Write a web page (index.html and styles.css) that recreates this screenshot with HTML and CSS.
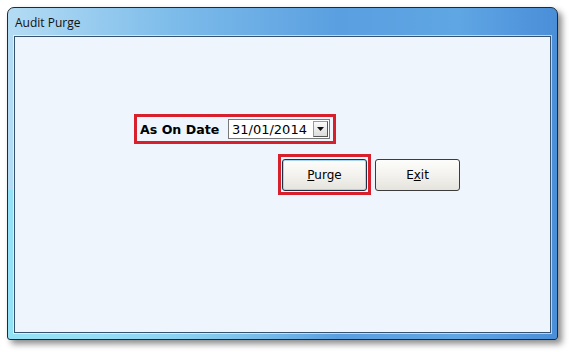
FILE: index.html
```html
<!DOCTYPE html>
<html lang="en">
<head>
  <meta charset="UTF-8">
  <title>Audit Purge</title>
  <link rel="stylesheet" href="styles.css">
</head>
<body>
<div class="window">
  <div class="titlebar">Audit Purge</div>
  <div class="client">
    <div class="mark date-row">
      <label class="date-label">As On Date</label>
      <div class="combo">
        <span class="combo-text">31/01/2014</span>
        <span class="combo-btn">
          <svg width="9" height="5" viewBox="0 0 9 5"><path d="M1 0h7L4.5 4z" fill="#111"/></svg>
        </span>
      </div>
    </div>
    <div class="btn-row">
      <div class="mark purge-mark">
        <button class="btn"><u>P</u>urge</button>
      </div>
      <button class="btn">E<u>x</u>it</button>
    </div>
  </div>
</div>
</body>
</html>
```

FILE: styles.css
```css
html, body { margin: 0; padding: 0; }
body { background: #fff; width: 569px; height: 352px; padding: 7px 0 0 7px; box-sizing: border-box; font-family: "DejaVu Sans", Verdana, sans-serif; }

.window {
  width: 551px; height: 333px; box-sizing: border-box;
  border: 1px solid #1d2a38; border-radius: 7px 7px 3px 3px;
  background:
    linear-gradient(90deg, #94e2f6 0%, rgba(148,226,246,0.6) 30%, rgba(148,226,246,0) 60%) left bottom / 100% 45% no-repeat,
    linear-gradient(90deg, #b4dcf4 0%, #7dbcea 30%, #5a9fe0 60%, #5fa6e4 82%, #4a8ed8 100%);
  box-shadow: 4px 4px 6px rgba(0,0,0,0.45);
  display: flex; flex-direction: column;
  padding: 0 6px 6px 6px;
}

.titlebar {
  height: 28px; line-height: 29px; padding-left: 1px;
  font-family: "Open Sans", "Noto Sans", sans-serif; font-size: 12px; color: #111;
}

.client {
  flex: 1; background: #eef5fd; border: 1px solid #36526e;
  padding: 77px 0 0 119px; box-sizing: border-box;
  box-shadow: 0 0 0 1px rgba(255,255,255,0.6);
}

.mark { border: 3px solid #d8202c; box-sizing: border-box; display: flex; align-items: center; }

.date-row { width: 202px; height: 30px; padding: 0 3px 0 3px; justify-content: space-between; }
.date-label { font-weight: bold; font-size: 12.6px; color: #000; }

.combo {
  width: 102px; height: 20px; box-sizing: border-box;
  border: 1px solid #7a7a7a; background: #fff;
  display: flex; align-items: center; justify-content: space-between;
  padding: 0 1px 0 3px;
}
.combo-text { font-size: 13px; color: #000; }
.combo-btn {
  width: 15px; height: 16px; box-sizing: border-box;
  border: 1px solid #9a9a9a; border-right-color: #555; border-bottom-color: #555;
  background: linear-gradient(#fafafa, #dcdcdc);
  display: flex; align-items: center; justify-content: center;
}

.btn-row { display: flex; align-items: center; gap: 4px; margin: 10px 0 0 144px; }
.purge-mark { width: 93px; height: 41px; justify-content: center; }

.btn {
  width: 85px; height: 32px; box-sizing: border-box;
  border: 1px solid #3c3c3c; border-radius: 3px;
  background: linear-gradient(#fdfdfb 0%, #f3f2ee 50%, #e4e3dd 100%);
  font-family: "DejaVu Sans", Verdana, sans-serif; font-size: 12px; color: #000;
  padding: 0;
}
.purge-mark .btn { border-color: #1f2e40; box-shadow: inset 0 0 0 1px #a8d4f0; }
```
